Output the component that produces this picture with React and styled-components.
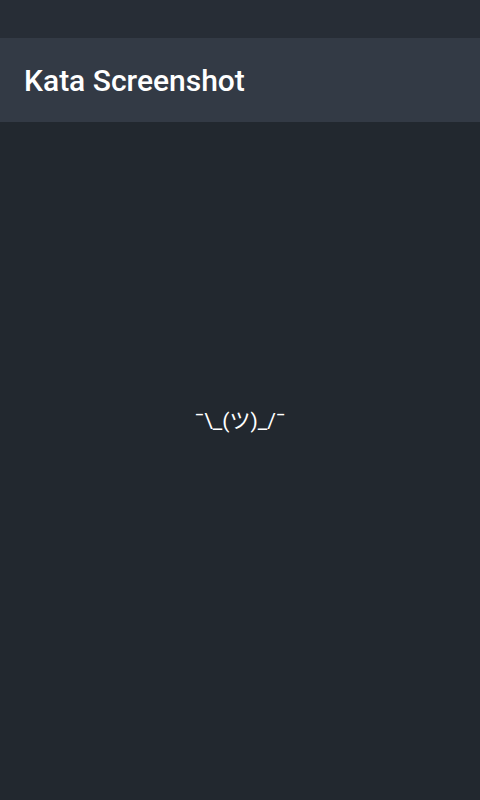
import React from "react";
import styled, { createGlobalStyle } from "styled-components";

const Global = createGlobalStyle`
  html, body { margin: 0; padding: 0; height: 100%; background: #22282f; }
  #root { height: 100%; }
`;

const Screen = styled.div`
  height: 800px;
  display: flex;
  flex-direction: column;
  background: #22282f;
  font-family: Roboto, "Noto Sans CJK JP", sans-serif;
  color: #ffffff;
`;

const StatusBar = styled.div`
  height: 38px;
  flex: none;
  background: #272d36;
`;

const Header = styled.header`
  height: 84px;
  flex: none;
  background: #333a45;
  display: flex;
  align-items: center;
  padding: 0 24px;
  box-sizing: border-box;
`;

const Title = styled.h1`
  margin: 0;
  font-size: 30px;
  font-weight: 500;
  line-height: 1;
  padding-top: 1px;
`;

const Main = styled.main`
  flex: 1;
  display: flex;
  align-items: center;
  justify-content: center;
  padding-bottom: 84px;
`;

const Shrug = styled.div`
  font-size: 21px;
  font-family: Roboto, "Noto Sans CJK JP", sans-serif;
`;

export default function App() {
  return (
    <>
      <Global />
      <Screen>
        <StatusBar />
        <Header>
          <Title>Kata Screenshot</Title>
        </Header>
        <Main>
          <Shrug>¯\_(ツ)_/¯</Shrug>
        </Main>
      </Screen>
    </>
  );
}
